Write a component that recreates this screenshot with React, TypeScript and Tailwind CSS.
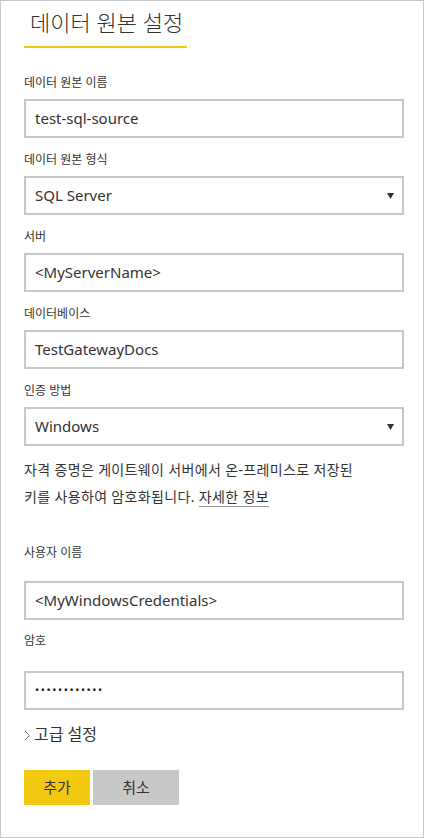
const font = { fontFamily: "'Noto Sans', 'Noto Sans CJK KR', sans-serif" }

function Label({ text, className = '' }: { text: string; className?: string }) {
  return <div className={`text-[12px] leading-4 text-[#333] ${className}`}>{text}</div>
}

function Field({ value, select = false }: { value: string; select?: boolean }) {
  return (
    <div className="flex h-[39px] items-center justify-between border-2 border-[#c8c8c8] bg-white pl-[9px] pr-[8px]">
      <span className="text-[15px] text-[#333]">{value}</span>
      {select && (
        <svg width="7" height="6" viewBox="0 0 7 6" className="mt-[1px]">
          <path d="M0 0h7L3.5 6z" fill="#333" />
        </svg>
      )}
    </div>
  )
}

export default function App() {
  return (
    <div style={font} className="h-[838px] w-[424px] border border-[#c8c8c8] bg-white pl-[23px] pr-[19px]">
      <div className="mt-[7px] inline-block border-b-2 border-[#f2c811] pb-[9px] pl-[6px] pr-[4px]">
        <h1 className="text-[22px] font-light leading-[29px] text-[#333]">데이터 원본 설정</h1>
      </div>

      <Label text="데이터 원본 이름" className="mt-[27px] mb-[8px]" />
      <Field value="test-sql-source" />

      <Label text="데이터 원본 형식" className="mt-[14px] mb-[8px]" />
      <Field value="SQL Server" select />

      <Label text="서버" className="mt-[14px] mb-[8px]" />
      <Field value="<MyServerName>" />

      <Label text="데이터베이스" className="mt-[14px] mb-[8px]" />
      <Field value="TestGatewayDocs" />

      <Label text="인증 방법" className="mt-[14px] mb-[8px]" />
      <Field value="Windows" select />

      <p className="mt-[10px] text-[14px] leading-[27px] tracking-[0.35px] text-[#333]">
        자격 증명은 게이트웨이 서버에서 온-프레미스로 저장된
        <br />
        키를 사용하여 암호화됩니다.{' '}
        <a className="underline decoration-[#999] underline-offset-[4px]">자세한 정보</a>
      </p>

      <Label text="사용자 이름" className="mt-[35px] mb-[20px]" />
      <Field value="<MyWindowsCredentials>" />

      <Label text="암호" className="mt-[13px] mb-[22px]" />
      <div className="flex h-[39px] items-center border-2 border-[#c8c8c8] pl-[9px]">
        <span className="text-[11px] tracking-[1.6px] text-[#222]">••••••••••••</span>
      </div>

      <div className="mt-[14px] flex items-center gap-[3px] text-[16px] leading-5 text-[#333]">
        <svg width="7" height="11" viewBox="0 0 7 11" className="mt-[2px]">
          <path d="M1 1l4.5 4.5L1 10" fill="none" stroke="#777" strokeWidth="1" />
        </svg>
        <span>고급 설정</span>
      </div>

      <div className="mt-[26px] flex gap-[3px] text-[15px] text-[#333]">
        <button className="h-[35px] w-[66px] bg-[#f2c811]">추가</button>
        <button className="h-[35px] w-[86px] bg-[#c8c8c8]">취소</button>
      </div>
    </div>
  )
}
